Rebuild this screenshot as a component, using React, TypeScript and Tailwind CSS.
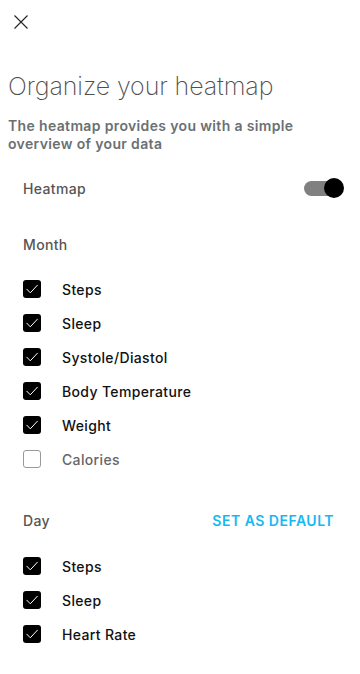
import React from "react";

const Check = ({ checked }: { checked: boolean }) =>
  checked ? (
    <div className="w-[18px] h-[18px] rounded-[3px] bg-black flex items-center justify-center shrink-0">
      <svg width="18" height="18" viewBox="0 0 18 18" fill="none">
        <path d="M3.8 9.2 L7.3 12.8 L14.4 5.2" stroke="#ffffff" strokeWidth="1" strokeLinecap="round" strokeLinejoin="round" />
      </svg>
    </div>
  ) : (
    <div className="w-[18px] h-[18px] rounded-[3px] border border-[#9a9a9a] bg-white shrink-0" />
  );

const Row = ({ label, checked = true }: { label: string; checked?: boolean }) => (
  <div className="h-[34px] flex items-center">
    <Check checked={checked} />
    <span className={`ml-[21px] text-[14px] font-medium tracking-[0.35px] ${checked ? "text-[#111111]" : "text-[#666666]"}`}>{label}</span>
  </div>
);

export default function App() {
  return (
    <div className="w-[360px] h-[674px] bg-white font-['Inter',sans-serif] pt-[15px] overflow-hidden">
      <div className="ml-[14px] w-[14px] h-[14px]">
        <svg width="14" height="14" viewBox="0 0 14 14" fill="none">
          <path d="M0.5 0.5 L13.5 13.5 M13.5 0.5 L0.5 13.5" stroke="#222" strokeWidth="1.1" />
        </svg>
      </div>
      <h1 className="mt-[41px] ml-[8px] text-[25px] leading-[32px] font-extralight tracking-[-0.1px] text-[#4f4f4f]">Organize your heatmap</h1>
      <p className="mt-[15px] ml-[8px] mr-[20px] text-[14px] leading-[18px] font-semibold tracking-[0.35px] text-[#6b7073]">
        The heatmap provides you with a simple overview of your data
      </p>
      <div className="mt-[18px] h-[34px] pl-[23px] pr-[16px] flex items-center justify-between">
        <span className="text-[14px] font-medium tracking-[0.35px] text-[#555555]">Heatmap</span>
        <div className="relative w-[40px] h-[20px] flex items-center">
          <div className="w-[32px] h-[15px] rounded-full bg-[#808080]" />
          <div className="absolute right-0 top-0 w-[20px] h-[20px] rounded-full bg-black" />
        </div>
      </div>
      <div className="mt-[22px] h-[34px] pl-[23px] flex items-center">
        <span className="text-[14px] font-medium tracking-[0.35px] text-[#555555]">Month</span>
      </div>
      <div className="mt-[11px] pl-[23px]">
        <Row label="Steps" />
        <Row label="Sleep" />
        <Row label="Systole/Diastol" />
        <Row label="Body Temperature" />
        <Row label="Weight" />
        <Row label="Calories" checked={false} />
      </div>
      <div className="mt-[27px] h-[34px] pl-[23px] pr-[26px] flex items-center justify-between">
        <span className="text-[14px] font-medium tracking-[0.35px] text-[#555555]">Day</span>
        <span className="text-[14px] font-semibold text-[#14b8f2] tracking-[0.5px]">SET AS DEFAULT</span>
      </div>
      <div className="mt-[12px] pl-[23px]">
        <Row label="Steps" />
        <Row label="Sleep" />
        <Row label="Heart Rate" />
      </div>
    </div>
  );
}
